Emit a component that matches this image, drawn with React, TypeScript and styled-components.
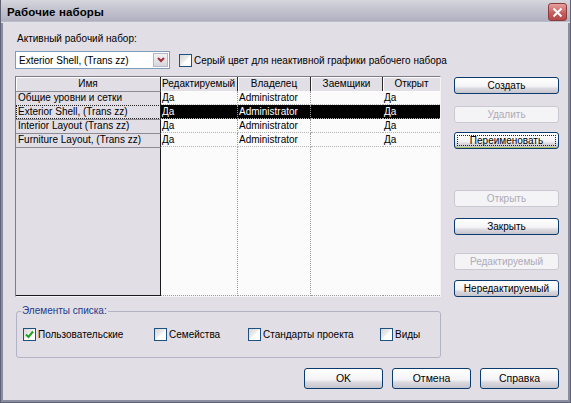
import React from "react";
import styled, { createGlobalStyle } from "styled-components";

const GlobalStyle = createGlobalStyle`
  html, body {
    margin: 0;
    padding: 0;
    background: #e2dee6;
  }
  * {
    box-sizing: border-box;
  }
`;

const FONT = `"Liberation Sans", Arial, sans-serif`;

const Window = styled.div`
  width: 571px;
  height: 403px;
  background: #e2dee6;
  border: 1px solid #5f6275;
  border-top: 0;
  box-shadow: inset 2px 0 0 #8a8ca0, inset -2px 0 0 #8a8ca0, inset 0 -2px 0 #8a8ca0;
  display: flex;
  flex-direction: column;
  font-family: ${FONT};
  font-size: 10px;
  color: #000;
  overflow: hidden;
`;

const TitleBar = styled.div`
  height: 23px;
  flex: none;
  display: flex;
  align-items: center;
  justify-content: space-between;
  padding: 0 3px 0 6px;
  background: linear-gradient(#d6d6de 0%, #c8c8d2 30%, #b9b9c8 70%, #aeaebe 92%, #f4f4f8 100%);
`;

const Title = styled.span`
  font-weight: bold;
  font-size: 11.5px;
  letter-spacing: 0.1px;
`;

const CloseButton = styled.div`
  width: 19px;
  height: 18px;
  border-radius: 3px;
  border: 1px solid #8a3b3b;
  background: linear-gradient(#e7a0a0, #c65a5a 60%, #b64848);
  display: flex;
  align-items: center;
  justify-content: center;
  margin-top: 1px;
`;

const Body = styled.div`
  flex: 1;
  display: grid;
  grid-template-columns: 426px 105px;
  column-gap: 13px;
  grid-template-rows: auto 1fr auto;
  padding: 9px 0 13px 14px;
`;

const TopArea = styled.div`
  grid-column: 1 / 3;
  display: flex;
  flex-direction: column;
`;

const Label = styled.div`
  padding-left: 2px;
  height: 13px;
  line-height: 13px;
`;

const TopRow = styled.div`
  display: flex;
  align-items: center;
  margin-top: 6px;
  gap: 9px;
`;

const Combo = styled.div`
  width: 155px;
  height: 18px;
  border: 1px solid #7f9db9;
  background: #fff;
  display: flex;
  align-items: center;
  padding: 1px;
`;

const ComboText = styled.div`
  flex: 1;
  padding-left: 2px;
  white-space: nowrap;
  overflow: hidden;
`;

const ComboArrow = styled.div`
  width: 15px;
  height: 14px;
  background: linear-gradient(#f2f2f4, #d8d6de);
  border: 1px solid #b8b6c4;
  display: flex;
  align-items: center;
  justify-content: center;
`;

const CheckLabel = styled.label`
  display: flex;
  align-items: center;
  gap: 2px;
  white-space: nowrap;
`;

const Box = styled.span`
  width: 13px;
  height: 13px;
  flex: none;
  border: 1px solid #1c5180;
  background: linear-gradient(135deg, #d8d6d8 0%, #eeeeee 48%, #ffffff 52%, #ffffff 100%);
  display: inline-flex;
  align-items: center;
  justify-content: center;
`;

const MainArea = styled.div`
  display: flex;
  flex-direction: column;
  margin-top: 7px;
`;

const Table = styled.div`
  height: 221px;
  border: 1px solid #7e7c88;
  border-right-color: #f4f4f4;
  border-bottom-color: #f4f4f4;
  background: #fbfbfc;
  display: flex;
  flex-direction: column;
`;

const COLS = "145px 77px 73px 72px 57px";

const Row = styled.div`
  display: grid;
  grid-template-columns: ${COLS};
  height: 14px;
  flex: none;
`;

const FillRow = styled.div`
  display: grid;
  grid-template-columns: ${COLS};
  flex: 1;
`;

const HeadCell = styled.div<{ $align?: string }>`
  background: #e2dee6;
  border-right: 1px solid #2a2a2a;
  box-shadow: inset 1px 1px 0 #ffffff;
  text-align: ${(p) => p.$align || "center"};
  line-height: 14px;
  white-space: nowrap;
  overflow: hidden;
  padding: 0 1px;
  &:last-child {
    border-right: 0;
  }
`;

const NameCell = styled.div<{ $focus?: boolean }>`
  background: #e2dee6;
  border-right: 1px solid #1a1a1a;
  border-top: ${(p) => (p.$focus ? "1px dotted #222" : "1px solid #8c8a96")};
  border-bottom: ${(p) => (p.$focus ? "1px dotted #222" : "0")};
  border-left: ${(p) => (p.$focus ? "1px dotted #222" : "0")};
  line-height: 12px;
  padding-left: ${(p) => (p.$focus ? "1px" : "2px")};
  white-space: nowrap;
  overflow: hidden;
`;

const NameFill = styled.div`
  background: #e2dee6;
  border-right: 1px solid #1a1a1a;
  border-top: 1px solid #8c8a96;
  border-bottom: 1px solid #1a1a1a;
`;

const DataCell = styled.div<{ $sel?: boolean; $line?: boolean }>`
  background: ${(p) => (p.$sel ? "#000" : "transparent")};
  color: ${(p) => (p.$sel ? "#fff" : "#000")};
  border-right: ${(p) => (p.$line ? "1px dotted #9a9a9a" : "0")};
  border-bottom: 1px dotted #b4b4b4;
  line-height: 13px;
  padding-left: 1px;
  white-space: nowrap;
  overflow: hidden;
`;

const DataFill = styled.div<{ $line?: boolean }>`
  border-right: ${(p) => (p.$line ? "1px dotted #9a9a9a" : "0")};
  border-bottom: 1px dotted #9a9a9a;
`;

const Group = styled.div`
  position: relative;
  margin: 14px 0 0 1px;
  padding: 0 0 0 6px;
  height: 47px;
  border: 1px solid #b2b4c6;
  border-radius: 3px;
  display: flex;
  align-items: center;
`;

const Legend = styled.span`
  position: absolute;
  top: -7px;
  left: 4px;
  background: #e2dee6;
  color: #1a3c8c;
  padding: 0 1px;
  line-height: 12px;
`;

const GroupItem = styled(CheckLabel)<{ $w: number }>`
  width: ${(p) => p.$w}px;
`;

const SideColumn = styled.div`
  display: flex;
  flex-direction: column;
  padding-top: 8px;
`;

const Button = styled.button<{ $mt?: number; $disabled?: boolean; $focus?: boolean }>`
  width: 105px;
  height: 17px;
  margin-top: ${(p) => p.$mt || 0}px;
  border-radius: 3px;
  border: 1px solid ${(p) => (p.$disabled ? "#cac8d0" : "#0a3a6e")};
  background: ${(p) =>
    p.$disabled
      ? "#f4f3f6"
      : "linear-gradient(#ffffff 0%, #f4f4f6 55%, #dcdae0 70%, #c6c4cc 100%)"};
  color: ${(p) => (p.$disabled ? "#aeacb6" : "#000")};
  font-family: ${FONT};
  font-size: 10px;
  padding: 0;
  line-height: 13px;
  outline: ${(p) => (p.$focus ? "1px dotted #222" : "none")};
  outline-offset: -4px;
  box-shadow: ${(p) => (p.$focus ? "inset 0 -1px 0 #a8c060" : "none")};
`;

const BottomRow = styled.div`
  grid-column: 1 / 3;
  display: flex;
  justify-content: flex-end;
  gap: 9px;
  padding-right: 12px;
  margin-right: -12px;
`;

const DlgButton = styled(Button)`
  width: 79px;
  height: 21px;
  font-size: 10.5px;
`;

const Check = () => (
  <svg width="9" height="9" viewBox="0 0 9 9">
    <path d="M1 4.5 L3.5 7 L8 1.5" fill="none" stroke="#21a121" strokeWidth="2" />
  </svg>
);

const rows = [
  { name: "Общие уровни и сетки", sel: false },
  { name: "Exterior Shell, (Trans zz)", sel: true },
  { name: "Interior Layout (Trans zz)", sel: false },
  { name: "Furniture Layout, (Trans zz)", sel: false },
];

export default function App() {
  return (
    <>
      <GlobalStyle />
      <Window>
        <TitleBar>
          <Title>Рабочие наборы</Title>
          <CloseButton>
            <svg width="11" height="11" viewBox="0 0 11 11">
              <path d="M1.5 1.5 L9.5 9.5 M9.5 1.5 L1.5 9.5" stroke="#fff" strokeWidth="2" />
            </svg>
          </CloseButton>
        </TitleBar>
        <Body>
          <TopArea>
            <Label>Активный рабочий набор:</Label>
            <TopRow>
              <Combo>
                <ComboText>Exterior Shell, (Trans zz)</ComboText>
                <ComboArrow>
                  <svg width="8" height="6" viewBox="0 0 8 6">
                    <path d="M1 1 L4 4 L7 1" fill="none" stroke="#a0303a" strokeWidth="2" />
                  </svg>
                </ComboArrow>
              </Combo>
              <CheckLabel>
                <Box />
                Серый цвет для неактивной графики рабочего набора
              </CheckLabel>
            </TopRow>
          </TopArea>
          <MainArea>
            <Table>
              <Row>
                <HeadCell>Имя</HeadCell>
                <HeadCell $align="left">Редактируемый</HeadCell>
                <HeadCell>Владелец</HeadCell>
                <HeadCell>Заемщики</HeadCell>
                <HeadCell>Открыт</HeadCell>
              </Row>
              {rows.map((r) => (
                <Row key={r.name}>
                  <NameCell $focus={r.sel}>{r.name}</NameCell>
                  <DataCell $sel={r.sel} $line>
                    Да
                  </DataCell>
                  <DataCell $sel={r.sel} $line>
                    Administrator
                  </DataCell>
                  <DataCell $sel={r.sel} />
                  <DataCell $sel={r.sel}>Да</DataCell>
                </Row>
              ))}
              <FillRow>
                <NameFill />
                <DataFill $line />
                <DataFill $line />
                <DataFill />
                <DataFill />
              </FillRow>
            </Table>
            <Group>
              <Legend>Элементы списка:</Legend>
              <GroupItem $w={131}>
                <Box>
                  <Check />
                </Box>
                Пользовательские
              </GroupItem>
              <GroupItem $w={94}>
                <Box />
                Семейства
              </GroupItem>
              <GroupItem $w={132}>
                <Box />
                Стандарты проекта
              </GroupItem>
              <GroupItem $w={50}>
                <Box />
                Виды
              </GroupItem>
            </Group>
          </MainArea>
          <SideColumn>
            <Button>Создать</Button>
            <Button $mt={12} $disabled>
              Удалить
            </Button>
            <Button $mt={9} $focus>
              Переименовать
            </Button>
            <Button $mt={41} $disabled>
              Открыть
            </Button>
            <Button $mt={11}>Закрыть</Button>
            <Button $mt={18} $disabled>
              Редактируемый
            </Button>
            <Button $mt={10}>Нередактируемый</Button>
          </SideColumn>
          <BottomRow>
            <DlgButton>OK</DlgButton>
            <DlgButton>Отмена</DlgButton>
            <DlgButton>Справка</DlgButton>
          </BottomRow>
        </Body>
      </Window>
    </>
  );
}
